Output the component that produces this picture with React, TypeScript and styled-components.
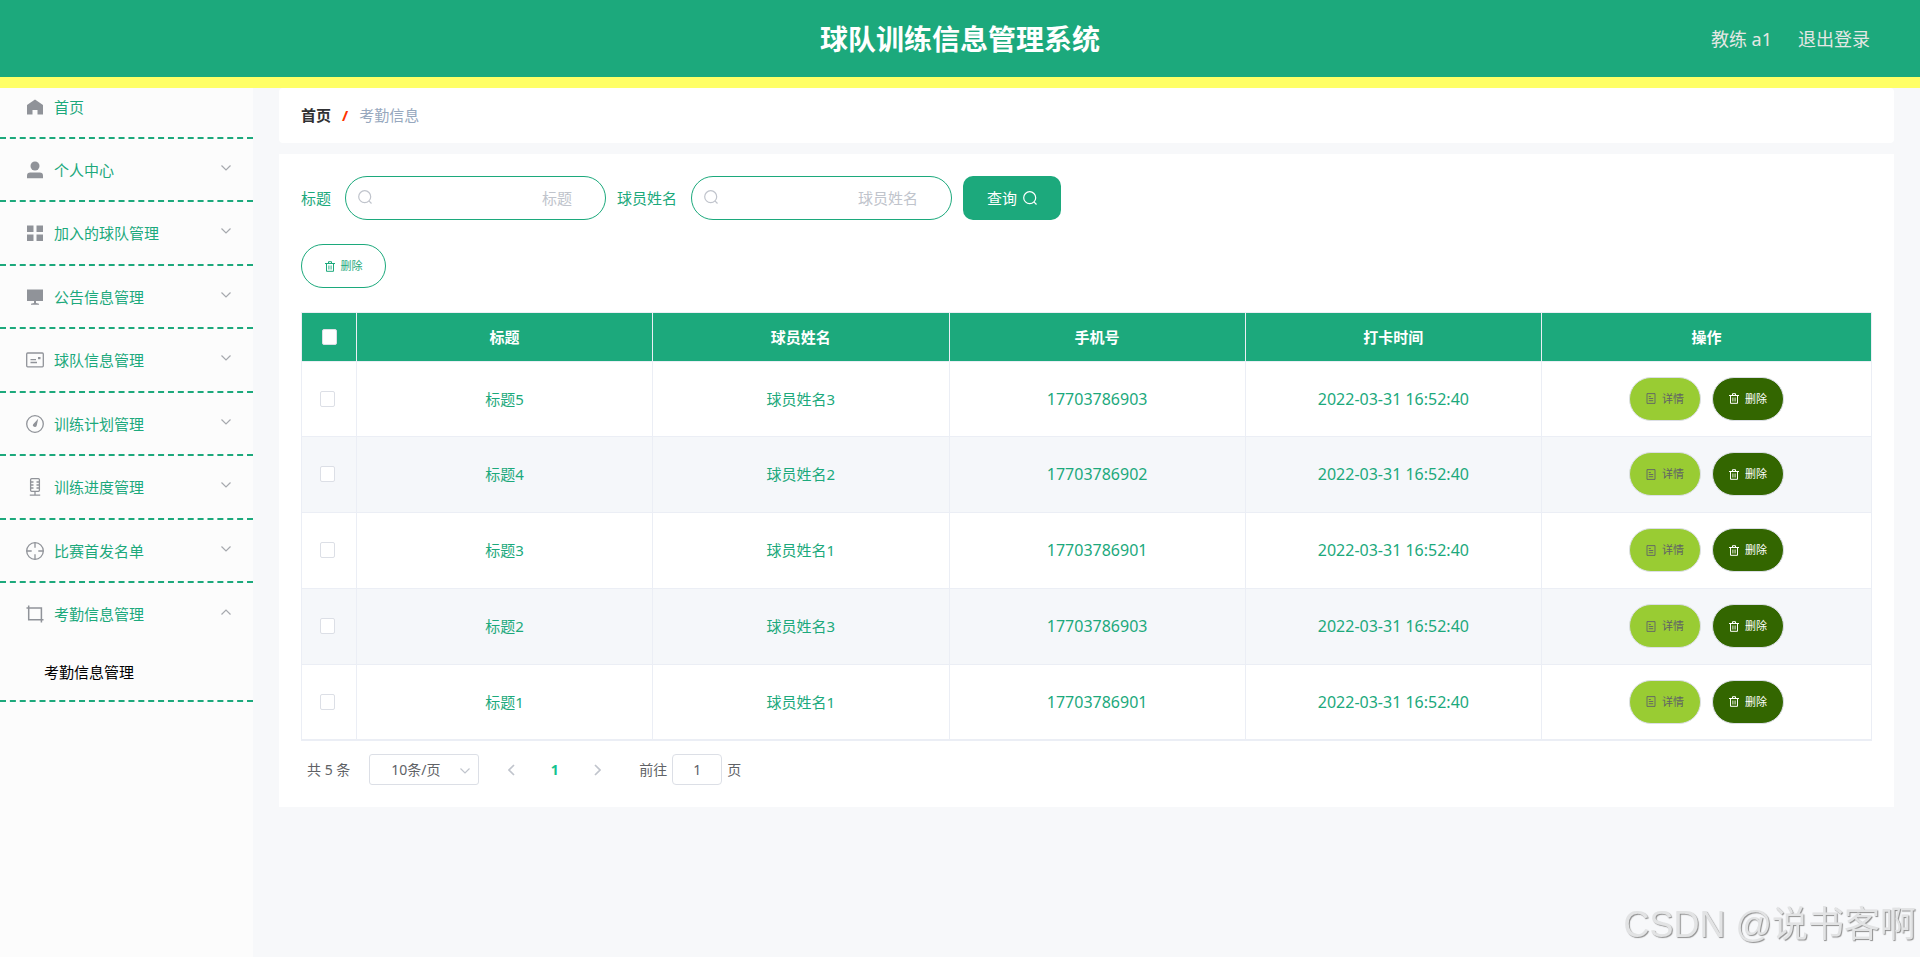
import React from 'react';
import styled, { createGlobalStyle, css } from 'styled-components';

const green = '#1ca97c';
const line = '#ebeef5';

const GlobalStyle = createGlobalStyle`
  *, *::before, *::after { box-sizing: border-box; }
  body {
    margin: 0;
    background: #f7f8fa;
    color: ${green};
    font-family: "Noto Sans", "Noto Sans CJK SC", sans-serif;
    font-size: 15px;
    line-height: 20px;
  }
  button, input, select { font: inherit; color: inherit; margin: 0; }
  button { cursor: pointer; }
  a { color: inherit; text-decoration: none; }
`;

const Page = styled.div`
  min-height: 100vh;
  display: flex;
  flex-direction: column;
`;

const Header = styled.header`
  height: 88px;
  padding: 0 50px;
  display: grid;
  grid-template-columns: 1fr auto 1fr;
  align-items: center;
  background: ${green};
  border-bottom: 11px solid #ffff66;
`;

const Title = styled.h1`
  grid-column: 2;
  margin: 0;
  color: #fff;
  font-size: 28px;
  line-height: 40px;
  font-weight: 700;
`;

const UserNav = styled.nav`
  display: flex;
  justify-content: flex-end;
  gap: 26px;
  color: #e4e7e4;
  font-size: 18px;
  line-height: 24px;
`;

const Body = styled.div`
  flex: 1;
  display: flex;
`;

const Sidebar = styled.aside`
  width: 253px;
  flex: none;
  background: #fcfcfc;
`;

const MenuList = styled.ul`
  list-style: none;
  margin: 0;
  padding: 0;
`;

const MenuItem = styled.li`
  border-bottom: 2px dashed ${green};
`;

const entry = css`
  width: 100%;
  display: flex;
  align-items: center;
  gap: 10px;
  padding: 0 22px 0 26px;
  border: 0;
  background: none;
  text-align: left;
`;

const HomeLink = styled.a`
  ${entry}
  height: 49px;
  padding-bottom: 11px;
`;

const MenuButton = styled.button`
  ${entry}
  height: 62px;
  ${MenuItem}:nth-child(even) > & { height: 61px; }
`;

const MenuText = styled.span`
  flex: 1;
`;

const MenuIcon = styled.svg`
  width: 18px;
  height: 18px;
  flex: none;
  fill: none;
  stroke: #909399;
  stroke-width: 1.3;
`;

const Chevron = styled.svg<{ $up?: boolean }>`
  width: 10px;
  height: 6px;
  margin-bottom: 4px;
  fill: none;
  stroke: #a6a9ae;
  stroke-width: 1.2;
  transform: ${p => (p.$up ? 'rotate(180deg)' : 'none')};
`;

const SubLink = styled.a`
  display: flex;
  align-items: center;
  height: 55px;
  padding: 0 0 2px 44px;
  color: #000;
`;

const Main = styled.main`
  flex: 1;
  min-width: 0;
  padding: 0 26px;
`;

const Breadcrumb = styled.nav`
  height: 55px;
  margin-bottom: 11px;
  padding: 0 22px 2px;
  display: flex;
  align-items: center;
  gap: 11px;
  background: #fff;
  border-radius: 4px;
`;

const CrumbHome = styled.a`
  color: #303133;
  font-weight: 700;
`;

const CrumbSlash = styled.span`
  color: #ff3300;
  font-weight: 700;
`;

const CrumbCurrent = styled.span`
  color: #97a8be;
`;

const Card = styled.section`
  padding: 22px;
  background: #fff;
`;

const SearchForm = styled.form`
  display: flex;
  align-items: center;
  gap: 11px;
  margin-bottom: 24px;
`;

const Field = styled.label`
  display: flex;
  align-items: center;
  gap: 14px;
`;

const InputWrap = styled.span`
  position: relative;
  display: flex;
`;

const InputIcon = styled.span`
  position: absolute;
  left: 13px;
  top: 14px;
  display: flex;
  color: #c0c4cc;
`;

const TextInput = styled.input`
  width: 261px;
  height: 44px;
  padding: 0 33px;
  border: 1px solid ${green};
  border-radius: 22px;
  background: #fff;
  text-align: right;
  outline: none;
  &::placeholder { color: #c0c4cc; opacity: 1; }
`;

const QueryButton = styled.button`
  width: 98px;
  height: 44px;
  display: flex;
  align-items: center;
  justify-content: center;
  gap: 6px;
  border: 0;
  border-radius: 10px;
  background: ${green};
  color: #fff;
`;

const PillButton = styled.button<{ $bg: string; $fg: string; $edge: string; $wide?: boolean }>`
  width: ${p => (p.$wide ? 85 : 72)}px;
  height: 44px;
  padding: 0;
  display: inline-flex;
  align-items: center;
  justify-content: center;
  gap: 6px;
  border: 1px solid ${p => p.$edge};
  border-radius: 22px;
  background: ${p => p.$bg};
  color: ${p => p.$fg};
  font-size: 11px;
  line-height: 16px;
`;

const Table = styled.table`
  width: 100%;
  margin-top: 24px;
  table-layout: fixed;
  border-collapse: separate;
  border-spacing: 0;
  border: solid ${line};
  border-width: 1px 0 1px 1px;
`;

const HeadCell = styled.th`
  height: 49px;
  padding: 0 0 1px;
  border: solid ${line};
  border-width: 0 1px 1px 0;
  background: ${green};
  color: #fff;
  font-weight: 700;
`;

const Row = styled.tr`
  height: 76px;
  &:first-child, &:last-child { height: 75px; }
  &:nth-child(even) { background: #f5f7fa; }
`;

const Cell = styled.td<{ $numeric?: boolean }>`
  padding: 0 0 1px;
  border: solid ${line};
  border-width: 0 1px 1px 0;
  text-align: center;
  font-size: ${p => (p.$numeric ? 16 : 15)}px;
`;

const CheckCell = styled(Cell)`
  padding-right: 3px;
`;

const Check = styled.input`
  appearance: none;
  display: block;
  width: 15px;
  height: 16px;
  margin: 0 auto;
  border: 1px solid #dcdfe6;
  border-radius: 2px;
  background: #fff;
`;

const Actions = styled.div`
  display: flex;
  justify-content: center;
  gap: 11px;
`;

const Pagination = styled.nav`
  display: flex;
  align-items: center;
  margin-top: 13px;
  padding-left: 6px;
  color: #606266;
  font-size: 14px;
`;

const SizeWrap = styled.span`
  position: relative;
  display: flex;
  margin-left: 19px;
  margin-right: 16px;
  svg { position: absolute; right: 9px; top: 14px; margin: 0; stroke: #c0c4cc; }
`;

const SizeSelect = styled.select`
  appearance: none;
  width: 110px;
  height: 31px;
  padding: 0 21px;
  border: 1px solid #dcdfe6;
  border-radius: 3px;
  background: #fff;
`;

const PageButton = styled.button<{ $active?: boolean }>`
  width: 33px;
  height: 31px;
  margin-right: 10px;
  padding: 0;
  display: flex;
  align-items: center;
  justify-content: center;
  border: 0;
  background: none;
  color: ${p => (p.$active ? '#13c38f' : '#c0c4cc')};
  font-weight: 700;
`;

const Jump = styled.label`
  display: flex;
  align-items: center;
  gap: 5px;
  margin-left: 15px;
`;

const JumpInput = styled.input`
  width: 50px;
  height: 31px;
  padding: 0 3px;
  border: 1px solid #dcdfe6;
  border-radius: 4px;
  background: #fff;
  text-align: center;
`;

const Watermark = styled.div`
  position: fixed;
  right: 4px;
  bottom: 8px;
  color: #e2e3e4;
  font-family: "Liberation Sans", "Noto Sans CJK SC", sans-serif;
  font-size: 36px;
  line-height: 48px;
  text-shadow: 1px 1px 1px #8f8f8f;
  pointer-events: none;
`;

const ChevronIcon = ({ up }: { up?: boolean }) => (
  <Chevron $up={up} viewBox="0 0 10 6" aria-hidden="true"><path d="M.5.5 5 5 9.500.5" /></Chevron>
);

const SearchIcon = () => (
  <svg width="14" height="14" viewBox="0 0 14 14" fill="none" stroke="currentColor" strokeWidth="1.2" aria-hidden="true">
    <circle cx="6.700" cy="6.700" r="6" /><path d="m10.900 10.900 2.600 2.600" />
  </svg>
);

const TrashIcon = () => (
  <svg width="10" height="11" viewBox="0 0 10 11" fill="none" stroke="currentColor" aria-hidden="true">
    <path d="M0 2.500h10M3.500 2V.7h3V2M1.500 2.500v7.800h7V2.500" /><path d="M3.900 4.500v4M6.100 4.500v4" strokeWidth=".9" />
  </svg>
);

const DetailIcon = () => (
  <svg width="10" height="11" viewBox="0 0 10 11" fill="none" stroke="currentColor" strokeWidth=".9" aria-hidden="true">
    <path d="M1 .6h8v9.800H1zM2.800 3.500h2M2.800 5.500h4.400M2.800 7.700h4.400" />
  </svg>
);

const solid = { fill: '#909399', stroke: 'none' };

const icons: Record<string, React.ReactNode> = {
  home: <path {...solid} d="M9 1.500 17 7v9.500h-5.500V12H6.500v4.500H1V7z" />,
  user: <><circle {...solid} cx="9" cy="5" r="4.500" /><path {...solid} d="M1 17.300v-2.500a3.300 3.300 0 0 1 3.300-3.300h9.400a3.300 3.300 0 0 1 3.300 3.300v2.500z" /></>,
  grid: <path {...solid} d="M1 1.500h6.500V8H1zM10.500 1.500H17V8h-6.500zM1 10.500h6.500V17H1zM10.500 10.500H17V17h-6.500z" />,
  screen: <path {...solid} d="M1 1.500h16v11.500H1zM8 13h2v2l3 .8v.9H5v-.9l3-.8z" />,
  card: <><rect x=".7" y="2" width="16.600" height="13.800" rx="1" /><path d="M4.500 8.700H10M4.500 11.500h6.500" /><path {...solid} d="M12 6h2.500v2.200H12z" /></>,
  gauge: <><circle cx="9" cy="9" r="8.300" /><path {...solid} d="m12.200 3.800-1.400 6.500a1.900 1.900 0 1 1-3.400-1.400z" /></>,
  mic: <><rect x="4.600" y=".7" width="8.800" height="12.600" rx="1" /><path d="M5 4h2.500M5 7h2.500M5 10h2.500M10.500 4H13M10.500 7H13M10.500 10H13M9 13.300v3.500M3.800 17.200h10.400" /></>,
  aim: <><circle cx="9" cy="9" r="8.300" /><path d="M9 .7v5M9 12.300v5M.7 9h5M12.300 9h5" /></>,
  crop: <path d="M.5 3h14.900v14.500M2.700.5v14.300h14.800" strokeWidth="1.500" />,
};

const menu = [
  ['user', '个人中心'],
  ['grid', '加入的球队管理'],
  ['screen', '公告信息管理'],
  ['card', '球队信息管理'],
  ['gauge', '训练计划管理'],
  ['mic', '训练进度管理'],
  ['aim', '比赛首发名单'],
];

const rows = [
  ['标题5', '球员姓名3', '17703786903'],
  ['标题4', '球员姓名2', '17703786902'],
  ['标题3', '球员姓名1', '17703786901'],
  ['标题2', '球员姓名3', '17703786903'],
  ['标题1', '球员姓名1', '17703786901'],
];

const Icon = ({ name }: { name: string }) => (
  <MenuIcon viewBox="0 0 18 18" aria-hidden="true">{icons[name]}</MenuIcon>
);

const SearchField = ({ label }: { label: string }) => (
  <Field>
    {label}
    <InputWrap>
      <InputIcon><SearchIcon /></InputIcon>
      <TextInput type="text" placeholder={label} />
    </InputWrap>
  </Field>
);

export default function App() {
  return (
    <Page>
      <GlobalStyle />
      <Header>
        <Title>球队训练信息管理系统</Title>
        <UserNav>
          <span>教练 a1</span>
          <a href="#logout">退出登录</a>
        </UserNav>
      </Header>
      <Body>
        <Sidebar>
          <MenuList>
            <MenuItem>
              <HomeLink href="#home"><Icon name="home" /><MenuText>首页</MenuText></HomeLink>
            </MenuItem>
            {menu.map(([icon, text]) => (
              <MenuItem key={text}>
                <MenuButton type="button" aria-expanded={false}>
                  <Icon name={icon} /><MenuText>{text}</MenuText><ChevronIcon />
                </MenuButton>
              </MenuItem>
            ))}
            <MenuItem>
              <MenuButton type="button" aria-expanded>
                <Icon name="crop" /><MenuText>考勤信息管理</MenuText><ChevronIcon up />
              </MenuButton>
              <SubLink href="#attendance">考勤信息管理</SubLink>
            </MenuItem>
          </MenuList>
        </Sidebar>
        <Main>
          <Breadcrumb aria-label="breadcrumb">
            <CrumbHome href="#home">首页</CrumbHome>
            <CrumbSlash>/</CrumbSlash>
            <CrumbCurrent>考勤信息</CrumbCurrent>
          </Breadcrumb>
          <Card>
            <SearchForm onSubmit={e => e.preventDefault()}>
              <SearchField label="标题" />
              <SearchField label="球员姓名" />
              <QueryButton type="submit">查询<SearchIcon /></QueryButton>
            </SearchForm>
            <PillButton type="button" $wide $bg="#fff" $fg={green} $edge={green}><TrashIcon />删除</PillButton>
            <Table>
              <colgroup>
                <col width="55" /><col /><col /><col /><col /><col width="330" />
              </colgroup>
              <thead>
                <tr>
                  <HeadCell><Check type="checkbox" aria-label="全选" /></HeadCell>
                  <HeadCell>标题</HeadCell>
                  <HeadCell>球员姓名</HeadCell>
                  <HeadCell>手机号</HeadCell>
                  <HeadCell>打卡时间</HeadCell>
                  <HeadCell>操作</HeadCell>
                </tr>
              </thead>
              <tbody>
                {rows.map(([title, player, phone]) => (
                  <Row key={title}>
                    <CheckCell><Check type="checkbox" aria-label={title} /></CheckCell>
                    <Cell>{title}</Cell>
                    <Cell>{player}</Cell>
                    <Cell $numeric>{phone}</Cell>
                    <Cell $numeric>2022-03-31 16:52:40</Cell>
                    <Cell>
                      <Actions>
                        <PillButton type="button" $bg="#99cc33" $fg="#606266" $edge="#dcdfe6"><DetailIcon />详情</PillButton>
                        <PillButton type="button" $bg="#336600" $fg="#fff" $edge="#dcdfe6"><TrashIcon />删除</PillButton>
                      </Actions>
                    </Cell>
                  </Row>
                ))}
              </tbody>
            </Table>
            <Pagination aria-label="pagination">
              <span>共 5 条</span>
              <SizeWrap>
                <SizeSelect aria-label="每页条数" defaultValue="10">
                  <option value="10">10条/页</option>
                </SizeSelect>
                <ChevronIcon />
              </SizeWrap>
              <PageButton type="button" aria-label="上一页">
                <svg width="7" height="12" viewBox="0 0 7 12" fill="none" stroke="currentColor" strokeWidth="1.700"><path d="M6 1 1 6l5 5" /></svg>
              </PageButton>
              <PageButton type="button" $active>1</PageButton>
              <PageButton type="button" aria-label="下一页">
                <svg width="7" height="12" viewBox="0 0 7 12" fill="none" stroke="currentColor" strokeWidth="1.700"><path d="m1 1 5 5-5 5" /></svg>
              </PageButton>
              <Jump>
                前往
                <JumpInput type="text" defaultValue="1" />
                页
              </Jump>
            </Pagination>
          </Card>
        </Main>
      </Body>
      <Watermark>CSDN @说书客啊</Watermark>
    </Page>
  );
}
